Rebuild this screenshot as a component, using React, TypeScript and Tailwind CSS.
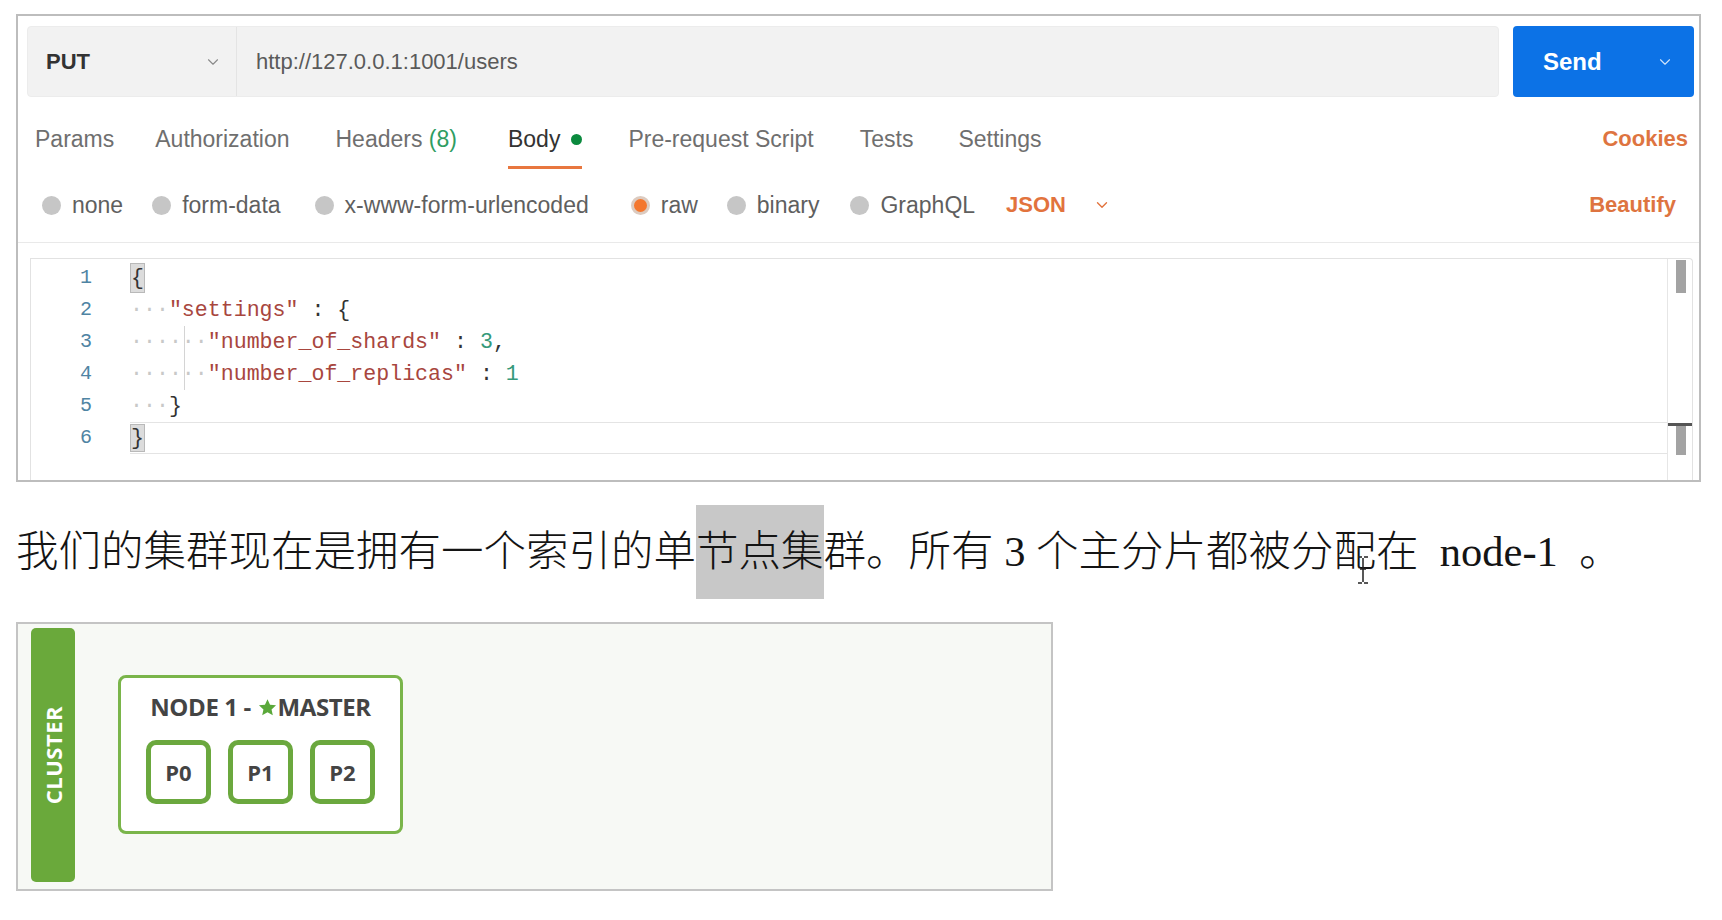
import { ChevronDown } from "lucide-react";

function Radio({ label, active, ml }: { label: string; active?: boolean; ml: string }) {
  return (
    <div className={`flex items-center gap-[11px] ${ml}`}>
      {active ? (
        <span className="w-[19px] h-[19px] rounded-full bg-[#f4772e] border-[3px] border-[#dccbc0]" />
      ) : (
        <span className="w-[19px] h-[19px] rounded-full bg-[#c6c6c6]" />
      )}
      <span className="text-[23px] leading-[26px] text-[#5f5f5f]">{label}</span>
    </div>
  );
}

function Panel() {
  const mono = "font-['Liberation_Mono','Courier_New',monospace]";
  const str = "text-[#a8463e]";
  const num = "text-[#35997a]";
  const pun = "text-[#333333]";
  const dot = "text-[#c8c8c8]";
  return (
    <div className="w-[1685px] h-[468px] border-2 border-[#bdbdbd] flex flex-col bg-white">
      {/* URL row */}
      <div className="flex mt-[10px] ml-[9px] mr-[5px] h-[71px] gap-[14px]">
        <div className="flex-1 flex bg-[#f2f2f2] rounded-[4px] border border-[#ececec]">
          <div className="w-[209px] flex items-center pl-[18px] pr-[14px] border-r border-[#e4e4e4]">
            <span className="text-[22px] font-bold text-[#333333]">PUT</span>
            <ChevronDown className="ml-auto text-[#8a8a8a]" size={18} strokeWidth={1.5} />
          </div>
          <div className="flex items-center pl-[19px] text-[22px] text-[#5a5a5a]">http://127.0.0.1:1001/users</div>
        </div>
        <div className="w-[181px] flex items-center bg-[#0c72e6] rounded-[4px]">
          <span className="pl-[30px] text-[24px] font-bold text-white">Send</span>
          <ChevronDown className="ml-auto mr-[20px] text-white/80" size={18} strokeWidth={1.5} />
        </div>
      </div>

      {/* Tabs row */}
      <div className="flex items-start mt-[29px] pl-[17px] pr-[11px] text-[23px] leading-[26px] text-[#6f6f6f]">
        <div className="pb-[14px] border-b-[3px] border-transparent">Params</div>
        <div className="ml-[41px] pb-[14px] border-b-[3px] border-transparent">Authorization</div>
        <div className="ml-[46px] pb-[14px] border-b-[3px] border-transparent">
          Headers <span className="text-[#2f9d62]">(8)</span>
        </div>
        <div className="ml-[51px] pb-[14px] border-b-[3px] border-[#e8773f] flex items-center text-[#333333]">
          Body
          <span className="ml-[11px] w-[11px] h-[11px] rounded-full bg-[#0b8a3e]" />
        </div>
        <div className="ml-[46px] pb-[14px] border-b-[3px] border-transparent">Pre-request Script</div>
        <div className="ml-[46px] pb-[14px] border-b-[3px] border-transparent">Tests</div>
        <div className="ml-[45px] pb-[14px] border-b-[3px] border-transparent">Settings</div>
        <div className="ml-auto font-bold text-[22px] text-[#de7440]">Cookies</div>
      </div>

      {/* Radio row */}
      <div className="flex items-center mt-[23px] pl-[24px] pr-[23px]">
        <Radio label="none" ml="ml-0" />
        <Radio label="form-data" ml="ml-[29px]" />
        <Radio label="x-www-form-urlencoded" ml="ml-[34px]" />
        <Radio label="raw" active ml="ml-[42px]" />
        <Radio label="binary" ml="ml-[29px]" />
        <Radio label="GraphQL" ml="ml-[31px]" />
        <span className="ml-[31px] text-[22px] leading-[26px] font-bold text-[#e2733d]">JSON</span>
        <ChevronDown className="ml-[27px] text-[#e2733d]" size={18} strokeWidth={1.8} />
        <span className="ml-auto text-[22px] leading-[26px] font-bold text-[#de7440]">Beautify</span>
      </div>

      <div className="mt-[24px] h-px bg-[#e9e9e9]" />

      {/* Editor */}
      <div className="flex-1 mt-[15px] ml-[12px] mr-[6px] border-t border-l border-r border-[#e2e2e2] rounded-tr-[4px] flex">
        <div className={`w-[61px] pt-[3px] text-right text-[20px] text-[#4f84a3] ${mono}`}>
          {[1, 2, 3, 4, 5, 6].map((n) => (
            <div key={n} className="h-[32px] leading-[32px]">{n}</div>
          ))}
        </div>
        <div className={`flex-1 pl-[38px] pt-[3px] relative text-[21.6px] ${mono}`}>
          <div className="absolute left-[92px] top-[67px] w-px h-[64px] bg-[#d4d4d4]" />
          <div className="flex items-center h-[32px] whitespace-pre">
            <span className={`h-[30px] flex items-center bg-[#dcdcdc] border border-[#b9b9b9] ${pun}`}>{"{"}</span>
          </div>
          <div className="flex items-center h-[32px] whitespace-pre">
            <span className={dot}>{"···"}</span>
            <span className={str}>"settings"</span>
            <span className={pun}>{" : {"}</span>
          </div>
          <div className="flex items-center h-[32px] whitespace-pre">
            <span className={dot}>{"······"}</span>
            <span className={str}>"number_of_shards"</span>
            <span className={pun}>{" : "}</span>
            <span className={num}>3</span>
            <span className={pun}>,</span>
          </div>
          <div className="flex items-center h-[32px] whitespace-pre">
            <span className={dot}>{"······"}</span>
            <span className={str}>"number_of_replicas"</span>
            <span className={pun}>{" : "}</span>
            <span className={num}>1</span>
          </div>
          <div className="flex items-center h-[32px] whitespace-pre">
            <span className={dot}>{"···"}</span>
            <span className={pun}>{"}"}</span>
          </div>
          <div className="flex items-center h-[32px] whitespace-pre border-y border-[#e4e4e4]">
            <span className={`h-[28px] flex items-center bg-[#dcdcdc] border border-[#b9b9b9] ${pun}`}>{"}"}</span>
          </div>
        </div>
        <div className="w-[25px] border-l border-[#e6e6e6] flex flex-col">
          <div className="ml-[8px] mt-[1px] w-[10px] h-[33px] bg-[#a3a3a3]" />
          <div className="mt-[130px] h-[3px] w-full bg-[#555555]" />
          <div className="ml-[8px] w-[10px] h-[29px] bg-[#a3a3a3]" />
        </div>
      </div>
    </div>
  );
}

function Paragraph() {
  return (
    <div className="relative mt-[23px] h-[94px] whitespace-pre text-[42.5px] leading-[94px] font-light text-[#141414] font-['Liberation_Serif','Noto_Sans_CJK_SC',serif]">
      我们的集群现在是拥有一个索引的单<span className="inline-block h-[94px] bg-[#c8c8c8]">节点集</span>群。所有 3 个主分片都被分配在{"\u00a0 "}node-1{"\u00a0 "}。
      <svg className="absolute left-[1341px] top-[51px]" width="12" height="28" viewBox="0 0 12 28">
        <path d="M1 1 H5 M7 1 H11 M6 2 V26 M1 27 H5 M7 27 H11 M3 13 H9" stroke="#222" strokeWidth="1.5" fill="none" />
      </svg>
    </div>
  );
}

function Diagram() {
  const os = "font-['Open_Sans','Liberation_Sans',sans-serif]";
  return (
    <div className={`mt-[23px] w-[1037px] h-[269px] border-2 border-[#c4c4c4] bg-[#f7f9f5] flex ${os}`}>
      <div className="ml-[13px] mt-[4px] mb-[7px] w-[44px] rounded-[5px] bg-[#6aa93b] flex items-center justify-center">
        <span className="[writing-mode:vertical-rl] rotate-180 text-white font-bold text-[22px] tracking-[0.5px]">CLUSTER</span>
      </div>
      <div className="ml-[43px] mt-[51px] w-[285px] h-[159px] border-[3px] border-[#7ab54a] rounded-[8px] bg-white flex flex-col items-center">
        <div className="mt-[14px] h-[30px] flex items-center text-[24px] font-bold text-[#444444] tracking-[-0.4px]">
          <span className="whitespace-pre">NODE 1 - </span>
          <svg width="19" height="19" viewBox="0 0 24 24" className="mx-[1px]">
            <path d="M12 1.5l3.2 7 7.6.8-5.7 5.1 1.6 7.5L12 18l-6.7 3.9 1.6-7.5L1.2 9.3l7.6-.8z" fill="#5aa83a" />
          </svg>
          <span>MASTER</span>
        </div>
        <div className="mt-[18px] flex gap-[17px]">
          {["P0", "P1", "P2"].map((p) => (
            <div key={p} className="w-[65px] h-[64px] border-[5px] border-[#6ba83e] rounded-[10px] flex items-center justify-center font-bold text-[22px] text-[#444444] bg-white">
              {p}
            </div>
          ))}
        </div>
      </div>
    </div>
  );
}

export default function App() {
  return (
    <div className="w-[1722px] h-[920px] bg-white overflow-hidden pl-[16px] pt-[14px] font-['Liberation_Sans',Arial,sans-serif]">
      <Panel />
      <Paragraph />
      <Diagram />
    </div>
  );
}
